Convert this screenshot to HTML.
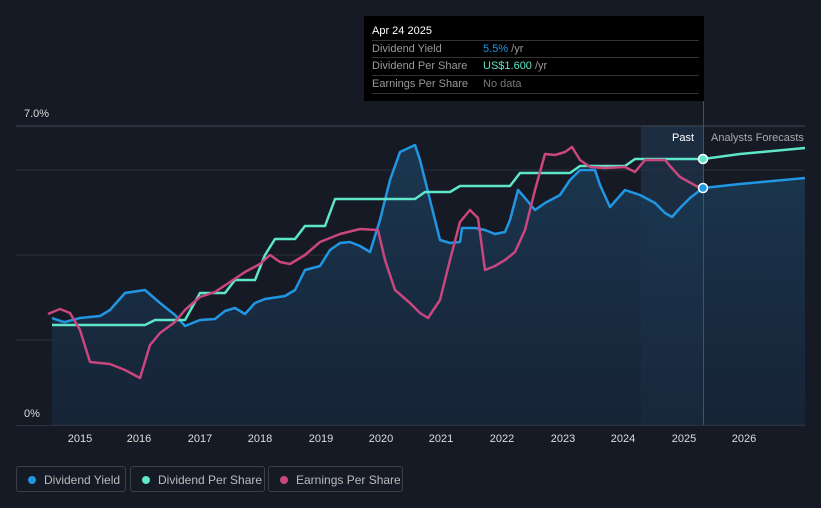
<!DOCTYPE html><html><head><style>
body{margin:0;width:821px;height:508px;background:#151a25;font-family:"Liberation Sans",sans-serif;overflow:hidden;position:relative}
.tt{position:absolute;left:364px;top:16px;width:340px;height:85px;background:#000}
.tt .h{position:absolute;left:8px;top:9px;color:#fff;font-size:11px}
.row{position:absolute;left:8px;width:327px;border-top:1px solid #333;font-size:11px;color:#999;height:17px;line-height:17px}
.row span{position:absolute;left:111px}
.leg{position:absolute;top:466px;height:26px;border:1px solid #3a3f4a;border-radius:3px;color:#bbb;font-size:12px;line-height:26px;box-sizing:border-box;white-space:nowrap;overflow:hidden}
.leg i{display:inline-block;width:8px;height:8px;border-radius:50%;margin:0 8px 0 11px}
.ax{position:absolute;top:433px;color:#ddd;font-size:11px;transform:translateX(-50%)}
</style></head><body>
<svg width="821" height="508" style="position:absolute;left:0;top:0">
<defs><linearGradient id="g" x1="0" y1="0" x2="0" y2="1"><stop offset="0" stop-color="#1b3a55" stop-opacity=".9"/><stop offset="1" stop-color="#17263a" stop-opacity=".8"/></linearGradient></defs>
<rect x="641" y="126" width="62" height="299" fill="#1c2d42"/>
<line x1="16" y1="126" x2="805" y2="126" stroke="#444a55"/>
<line x1="16" y1="170" x2="805" y2="170" stroke="#2a303b"/>
<line x1="16" y1="255" x2="805" y2="255" stroke="#2a303b"/>
<line x1="16" y1="340" x2="805" y2="340" stroke="#2a303b"/>
<line x1="16" y1="425" x2="805" y2="425" stroke="#444a55"/>
<path d="M52,318 C58,320 62,322 65,322 L80,318 L100,316 L110,310 L125,293 L145,290 L160,303 L175,315 L185,326 L200,320 L215,319 L225,311 L235,308 L245,314 L255,303 L265,299 L285,296 L295,290 L305,270 L320,266 L330,250 L340,243 L350,242 L360,246 L370,252 L380,220 L390,180 L400,152 L415,145 L420,160 L430,200 L440,240 L450,243 L460,242 L462,228 L475,228 L485,230 L495,234 L505,232 L510,220 L518,190 L525,198 L535,210 L545,203 L560,195 L570,180 L580,170 L595,170 L600,185 L610,207 L625,190 L640,195 L655,203 L665,213 L672,217 L680,208 L690,198 L703,188 L740,184 L805,178 L805,425 L52,425Z" fill="url(#g)"/>
<path d="M52,318 C58,320 62,322 65,322 L80,318 L100,316 L110,310 L125,293 L145,290 L160,303 L175,315 L185,326 L200,320 L215,319 L225,311 L235,308 L245,314 L255,303 L265,299 L285,296 L295,290 L305,270 L320,266 L330,250 L340,243 L350,242 L360,246 L370,252 L380,220 L390,180 L400,152 L415,145 L420,160 L430,200 L440,240 L450,243 L460,242 L462,228 L475,228 L485,230 L495,234 L505,232 L510,220 L518,190 L525,198 L535,210 L545,203 L560,195 L570,180 L580,170 L595,170 L600,185 L610,207 L625,190 L640,195 L655,203 L665,213 L672,217 L680,208 L690,198 L703,188 L740,184 L805,178" fill="none" stroke="#2196e3" stroke-width="2.5" stroke-linejoin="round"/>
<path d="M52,325 L145,325 L155,320 L185,320 L200,293 L225,293 L235,280 L255,280 L265,255 L275,239 L295,239 L305,226 L325,226 L335,199 L415,199 L425,192 L450,192 L460,186 L510,186 L520,173 L570,173 L580,166 L625,166 L635,159 L703,159 L740,154 L805,148" fill="none" stroke="#5ee6c8" stroke-width="2.5" stroke-linejoin="round"/>
<path d="M48,314 L60,309 L70,313 L80,330 L90,362 L110,364 L125,370 L140,378 L150,345 L160,333 L175,322 L185,310 L200,297 L215,292 L230,282 L245,272 L260,264 L270,255 L280,262 L290,264 L305,255 L320,242 L340,234 L360,229 L378,230 L385,260 L395,290 L410,303 L420,313 L428,318 L440,300 L450,260 L460,222 L470,210 L478,218 L485,270 L495,266 L505,260 L515,252 L525,230 L535,190 L545,154 L555,155 L565,152 L572,147 L580,160 L590,167 L605,168 L625,167 L635,172 L645,160 L665,160 L670,166 L680,177 L698,187" fill="none" stroke="#c9467f" stroke-width="2.5" stroke-linejoin="round"/>
<line x1="703.5" y1="100" x2="703.5" y2="425" stroke="#3a5570"/>
<circle cx="703" cy="159" r="4.5" fill="#5ee6c8" stroke="#fff" stroke-width="1.5"/>
<circle cx="703" cy="188" r="4.5" fill="#2196e3" stroke="#fff" stroke-width="1.5"/>
<rect x="16" y="405" width="36" height="20" fill="#151a25"/>
</svg>
<div style="position:absolute;left:24px;top:108px;color:#ddd;font-size:11px">7.0%</div>
<div style="position:absolute;left:24px;top:408px;color:#ddd;font-size:11px">0%</div>
<div style="position:absolute;left:672px;top:132px;color:#fff;font-size:11px">Past</div>
<div style="position:absolute;left:711px;top:132px;color:#aaa;font-size:11px">Analysts Forecasts</div>
<div class="ax" style="left:80px">2015</div><div class="ax" style="left:139px">2016</div><div class="ax" style="left:200px">2017</div><div class="ax" style="left:260px">2018</div><div class="ax" style="left:321px">2019</div><div class="ax" style="left:381px">2020</div><div class="ax" style="left:441px">2021</div><div class="ax" style="left:502px">2022</div><div class="ax" style="left:563px">2023</div><div class="ax" style="left:623px">2024</div><div class="ax" style="left:684px">2025</div><div class="ax" style="left:744px">2026</div>
<div class="tt"><div class="h">Apr 24 2025</div>
<div class="row" style="top:24px">Dividend Yield<span><b style="font-weight:normal;color:#2196e3">5.5%</b> /yr</span></div>
<div class="row" style="top:41px">Dividend Per Share<span><b style="font-weight:normal;color:#5ee6c8">US$1.600</b> /yr</span></div>
<div class="row" style="top:59px;border-bottom:1px solid #333">Earnings Per Share<span style="color:#777">No data</span></div></div>
<div class="leg" style="left:16px;width:110px"><i style="background:#2196e3"></i>Dividend Yield</div>
<div class="leg" style="left:130px;width:135px"><i style="background:#5ee6c8"></i>Dividend Per Share</div>
<div class="leg" style="left:268px;width:135px"><i style="background:#c9467f"></i>Earnings Per Share</div>
</body></html>
